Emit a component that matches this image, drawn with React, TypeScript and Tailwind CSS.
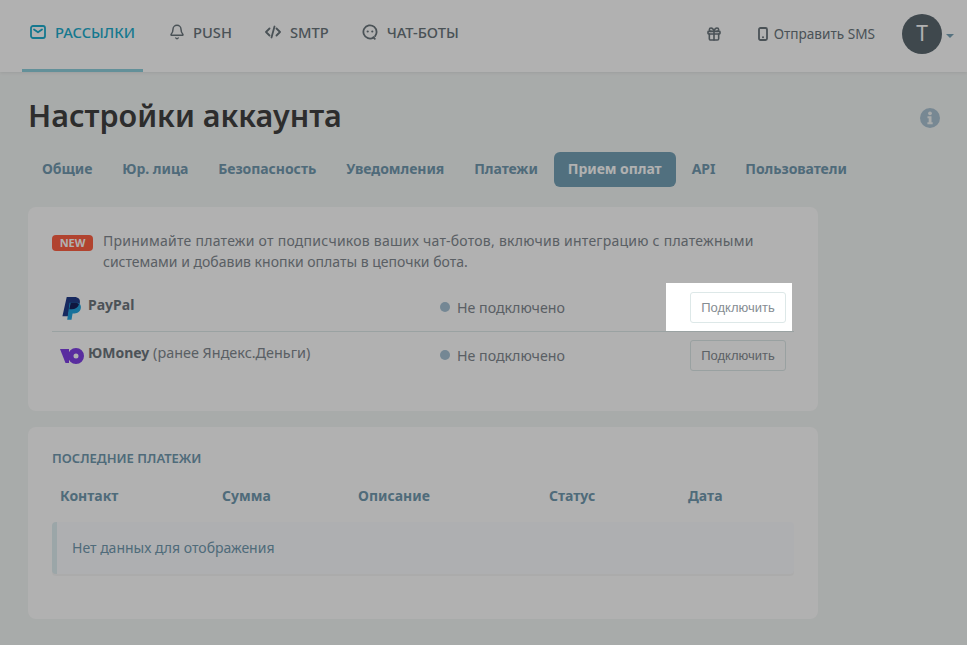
import { Bell, Gift } from 'lucide-react'

const tabs = ['Общие', 'Юр. лица', 'Безопасность', 'Уведомления', 'Платежи', 'Прием оплат', 'API', 'Пользователи']

function MailIcon() {
  return (
    <svg width="16" height="14" viewBox="0 0 16 14" fill="none" stroke="currentColor" strokeWidth="1.8">
      <rect x="1" y="1" width="14" height="12" rx="2" />
      <path d="M4 4.500l4 2.800 4-2.800" strokeLinecap="round" strokeLinejoin="round" />
    </svg>
  )
}

function CodeIcon() {
  return (
    <svg width="16" height="14" viewBox="0 0 16 14" fill="none" stroke="currentColor" strokeWidth="1.8" strokeLinecap="round" strokeLinejoin="round">
      <path d="M4.500 3.500L1 7l3.500 3.500M11.500 3.500L15 7l-3.500 3.500M9.500 1.500L6.500 12.500" />
    </svg>
  )
}

function BotIcon() {
  return (
    <svg width="16" height="16" viewBox="0 0 16 16" fill="none">
      <path d="M11.500 13.500A6.600 6.600 0 1 1 14.600 8c0 1.600-.6 3-1.500 4.100" stroke="currentColor" strokeWidth="1.800" strokeLinecap="round" />
      <path d="M11.500 13.300l1.300 1.500" stroke="currentColor" strokeWidth="1.800" strokeLinecap="round" />
      <circle cx="5.700" cy="7.500" r="1.100" fill="currentColor" />
      <circle cx="10.300" cy="7.500" r="1.100" fill="currentColor" />
    </svg>
  )
}

function PhoneIcon() {
  return (
    <svg width="10" height="14" viewBox="0 0 10 14" fill="none">
      <rect x="1" y="1" width="8" height="12" rx="1.500" stroke="currentColor" strokeWidth="1.800" />
      <circle cx="5" cy="10.300" r="1" fill="currentColor" />
    </svg>
  )
}

function InfoIcon() {
  return (
    <svg width="20" height="20" viewBox="0 0 20 20">
      <circle cx="10" cy="10" r="10" fill="#acc4d4" />
      <circle cx="10" cy="5.300" r="1.900" fill="#f3f6f5" />
      <path d="M7.500 8.300h4v6h1.200v2H7.400v-2h1.300v-4H7.500z" fill="#f3f6f5" />
    </svg>
  )
}

function PayPalLogo() {
  return (
    <svg width="20" height="23" viewBox="0 0 20 24">
      <path d="M4.500 0h8c4 0 6.300 2.300 5.700 6-.7 4.300-3.700 6.700-8 6.700H7.300L5.800 20H0z" fill="#223b89" />
      <path d="M7.500 6h7c2.700 0 5 1.500 4.800 5-.3 3.700-3 6.200-6.700 6.200h-2L9.500 23.700H5z" fill="#25a5e0" />
      <path d="M7.300 12.700h2.400c3.600 0 6.500-1.800 7.600-4.900-.7-1.200-2-1.800-3.500-1.800H8.600z" fill="#16205c" />
    </svg>
  )
}

function YooMoneyLogo() {
  return (
    <svg width="24" height="16" viewBox="0 0 24 16">
      <path d="M0 1h9v14H5.500z" fill="#8041e6" />
      <path fillRule="evenodd" d="M16 0a8 8 0 1 1 0 16 8 8 0 0 1 0-16zm0 5.500a2.500 2.500 0 1 0 0 5 2.500 2.500 0 0 0 0-5z" fill="#8041e6" />
    </svg>
  )
}

function PaymentRow({ logo, name, note, last }: { logo: React.ReactNode; name: string; note?: string; last?: boolean }) {
  return (
    <div className={`flex items-center pr-2 pl-2 ${last ? 'h-[47px]' : 'h-12 border-b border-[#deeaea]'}`}>
      <div className="flex w-[380px] items-center">
        <span className="mr-1 flex w-6 shrink-0 items-center justify-center pt-0.5">{logo}</span>
        <span className="pb-[5px] text-sm text-[#828990]">
          <b className="font-bold text-[#6e777e]">{name}</b>
          <span className="text-[14.4px]">{note}</span>
        </span>
      </div>
      <div className="flex flex-1 items-center text-[14.2px] text-[#828990]">
        <span className="mr-[7px] h-2.5 w-2.5 rounded-full bg-[#a7c3d6]" />
        Не подключено
      </div>
      <button className="h-[31px] w-24 rounded-[3px] border border-[#dde8e8] bg-white font-['Liberation_Sans',sans-serif] text-[13px] text-[#868d93]">
        Подключить
      </button>
    </div>
  )
}

export default function App() {
  return (
    <div className="relative h-[645px] w-[967px] overflow-hidden bg-[#f3f6f5] font-['Noto_Sans',sans-serif]">
      <header className="flex h-[72px] items-center bg-white pr-[13px] pl-[22px] shadow-[0_1px_3px_rgba(0,0,0,0.08)]">
        <nav className="flex h-full items-center text-[14.7px] font-medium text-[#6b767d]">
          <a className="flex h-full w-[121px] items-center justify-center gap-[9px] border-b-[3px] border-[#8fd0dd] pb-[5px] text-[#1eadce]">
            <MailIcon />
            РАССЫЛКИ
          </a>
          <a className="ml-[26px] flex h-full items-center gap-2 pb-2">
            <Bell size={16} strokeWidth={2.2} />
            PUSH
          </a>
          <a className="ml-[33px] flex h-full items-center gap-[9px] pb-2">
            <CodeIcon />
            SMTP
          </a>
          <a className="ml-[33px] flex h-full items-center gap-[9px] pb-2">
            <BotIcon />
            ЧАТ-БОТЫ
          </a>
        </nav>
        <div className="ml-auto flex items-center pb-1 text-[#6b767d]">
          <Gift size={16} strokeWidth={2.4} />
          <span className="ml-9">
            <PhoneIcon />
          </span>
          <span className="ml-1.5 text-[13.6px]">Отправить SMS</span>
          <span className="ml-[27px] flex h-10 w-10 items-center justify-center rounded-full bg-[#5b6870] text-[21px] text-white">T</span>
          <span className="mt-1 ml-1 h-0 w-0 border-x-4 border-t-4 border-x-transparent border-t-[#7ba3b8]" />
        </div>
      </header>

      <main className="w-[818px] pt-[25px] pl-7">
        <h1 className="text-[30.5px] leading-9 font-semibold text-[#424242]">Настройки аккаунта</h1>
        <div className="mt-[19px] flex h-[35px] items-center gap-0.5 text-sm font-bold tracking-[-0.05px] text-[#729ab0]">
          {tabs.map(t => (
            <span key={t} className={t === 'Прием оплат' ? 'flex h-full items-center rounded-md bg-[#75a2b7] px-3.5 pb-0.5 whitespace-nowrap text-white' : 'px-3.5 pb-0.5 whitespace-nowrap'}>
              {t}
            </span>
          ))}
        </div>

        <section className="mt-5 h-[204px] rounded-lg bg-white px-6 pt-[23px]">
          <div className="flex items-start">
            <span className="mt-[5px] flex h-4 w-[41px] shrink-0 items-center justify-center rounded-sm bg-[#ff6144] text-[11px] font-bold text-white">NEW</span>
            <p className="ml-2.5 text-sm leading-[21px] text-[#828990]">
              <span className="tracking-[0.25px]">Принимайте платежи от подписчиков ваших чат-ботов, включив интеграцию с платежными</span>
              <br />
              системами и добавив кнопки оплаты в цепочки бота.
            </p>
          </div>
          <div className="mt-3">
            <PaymentRow logo={<PayPalLogo />} name="PayPal" />
            <PaymentRow logo={<YooMoneyLogo />} name="ЮMoney" note=" (ранее Яндекс.Деньги)" last />
          </div>
        </section>

        <section className="mt-4 h-[192px] rounded-lg bg-white px-6 pt-[22px]">
          <h2 className="text-[13px] font-semibold text-[#729ab0]">ПОСЛЕДНИЕ ПЛАТЕЖИ</h2>
          <div className="mt-[17px] grid grid-cols-[162px_136px_191px_139px_1fr] pl-2 text-sm font-bold text-[#729ab0]">
            <span>Контакт</span>
            <span>Сумма</span>
            <span>Описание</span>
            <span>Статус</span>
            <span>Дата</span>
          </div>
          <div className="mt-4 flex h-[52px] items-center rounded-sm border-l-[5px] border-[#e0eff2] bg-[#fbfcff] pl-[15px] text-sm text-[#729ab0] shadow-[0_2px_0_rgba(0,0,0,0.03)]">
            Нет данных для отображения
          </div>
        </section>
      </main>

      <div className="absolute top-[108px] right-[27px]">
        <InfoIcon />
      </div>

      <div className="pointer-events-none absolute top-[283px] left-[666px] h-12 w-[126px] shadow-[0_0_0_2000px_rgba(0,0,0,0.306)]" />
    </div>
  )
}
